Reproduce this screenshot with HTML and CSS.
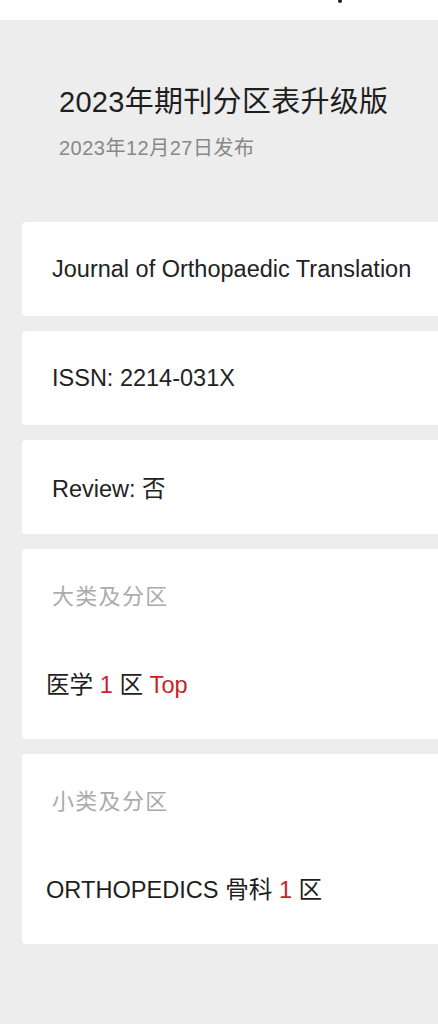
FILE: index.html
```html
<!DOCTYPE html>
<html lang="zh-CN">
<head>
<meta charset="utf-8">
<title>2023年期刊分区表升级版</title>
<link rel="stylesheet" href="styles.css">
</head>
<body>
<div class="topbar"><span class="topbar-dot"></span></div>
<header class="header">
  <h1 class="title">2023年期刊分区表升级版</h1>
  <p class="subtitle">2023年12月27日发布</p>
</header>
<main class="cards">
  <section class="card card-simple">Journal of Orthopaedic Translation</section>
  <section class="card card-simple">ISSN: 2214-031X</section>
  <section class="card card-simple">Review: 否</section>
  <section class="card card-zone">
    <div class="zone-label">大类及分区</div>
    <div class="zone-value">医学 <span class="red">1</span> 区 <span class="red">Top</span></div>
  </section>
  <section class="card card-zone">
    <div class="zone-label">小类及分区</div>
    <div class="zone-value">ORTHOPEDICS 骨科 <span class="red">1</span> 区</div>
  </section>
</main>
</body>
</html>
```

FILE: styles.css
```css
html, body {
  margin: 0;
  padding: 0;
}
body {
  background: #ededed;
  font-family: "Liberation Sans", "Noto Sans CJK SC", sans-serif;
  color: #1e1e1e;
  width: 438px;
  height: 1024px;
  overflow: hidden;
}
.topbar {
  height: 20px;
  background: #ffffff;
  display: flex;
}
.topbar-dot {
  width: 4px;
  height: 4px;
  border-radius: 50%;
  background: #222;
  margin-left: 338px;
  margin-top: -1px;
}
.header {
  padding: 62px 0 0 59px;
}
.title {
  margin: 0;
  font-weight: normal;
  font-size: 29px;
  letter-spacing: 0.3px;
  line-height: 40px;
  color: #1e1e1e;
}
.subtitle {
  margin: 12px 0 0 0;
  font-size: 20px;
  letter-spacing: 0.5px;
  line-height: 28px;
  color: #888888;
}
.cards {
  margin: 60px 0 0 22px;
  display: flex;
  flex-direction: column;
  gap: 15px;
}
.card {
  background: #ffffff;
  border-radius: 4px 0 0 4px;
}
.card-simple {
  height: 94px;
  display: flex;
  align-items: center;
  padding-left: 30px;
  font-size: 23.5px;
  color: #222;
}
.card-zone {
  height: 190px;
  box-sizing: border-box;
  padding: 33px 0 0 30px;
}
.zone-label {
  font-size: 22px;
  letter-spacing: 1.3px;
  line-height: 30px;
  color: #ababab;
}
.zone-value {
  margin: 58px 0 0 -6px;
  font-size: 23.6px;
  line-height: 30px;
  color: #1e1e1e;
}
.red {
  color: #cc1f26;
}
```
